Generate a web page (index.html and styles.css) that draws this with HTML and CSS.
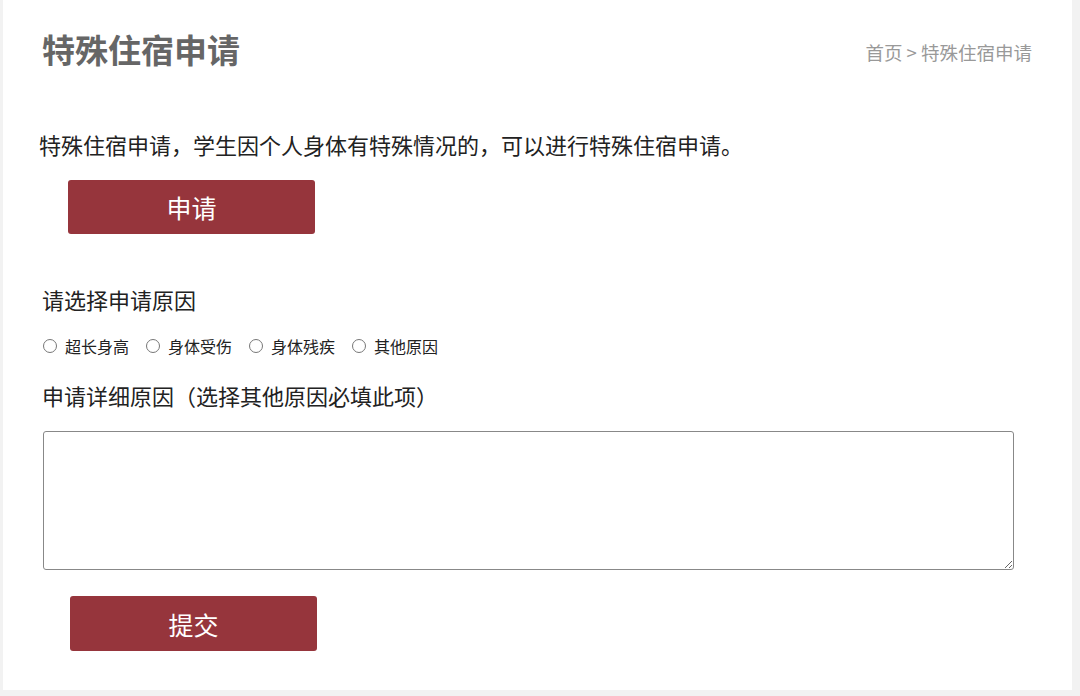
FILE: index.html
```html
<!DOCTYPE html>
<html lang="zh-CN">
<head>
<meta charset="utf-8">
<title>特殊住宿申请</title>
<link rel="stylesheet" href="styles.css">
</head>
<body>
<div class="panel">
  <div class="header">
    <h1 class="title">特殊住宿申请</h1>
    <div class="crumb">首页 &gt; 特殊住宿申请</div>
  </div>
  <p class="desc">特殊住宿申请，学生因个人身体有特殊情况的，可以进行特殊住宿申请。</p>
  <button class="btn btn-apply" type="button">申请</button>
  <div class="label label-reason">请选择申请原因</div>
  <div class="radios">
    <label class="opt"><input type="radio" name="r"><span>超长身高</span></label>
    <label class="opt"><input type="radio" name="r"><span>身体受伤</span></label>
    <label class="opt"><input type="radio" name="r"><span>身体残疾</span></label>
    <label class="opt"><input type="radio" name="r"><span>其他原因</span></label>
  </div>
  <div class="label label-detail">申请详细原因（选择其他原因必填此项）</div>
  <textarea class="detail"></textarea>
  <button class="btn btn-submit" type="button">提交</button>
</div>
</body>
</html>
```

FILE: styles.css
```css
html, body {
  margin: 0;
  padding: 0;
  background: #f2f2f2;
}
body {
  font-family: "Noto Sans CJK SC", "Noto Sans", sans-serif;
  color: #222;
}
.panel {
  margin-left: 3px;
  width: 1069px;
  height: 690px;
  background: #fff;
  box-sizing: border-box;
  padding: 29px 0 0 34px;
  display: flex;
  flex-direction: column;
  align-items: flex-start;
}
.header {
  width: 995px;
  display: flex;
  justify-content: space-between;
  align-items: flex-start;
}
.title {
  margin: 0 0 0 5px;
  font-size: 33px;
  line-height: 40px;
  font-weight: bold;
  color: #666;
}
.crumb {
  margin-top: 11px;
  font-size: 18.5px;
  line-height: 24px;
  color: #999;
}
.desc {
  margin: 60px 0 0 2px;
  font-size: 22px;
  line-height: 30px;
  color: #222;
}
.btn {
  width: 247px;
  height: 54px;
  border: none;
  border-radius: 3px;
  background: #96353c;
  color: #fff;
  font-family: "Noto Sans CJK SC", "Noto Sans", sans-serif;
  font-size: 25px;
  padding: 0;
}
.btn-apply {
  margin: 21px 0 0 31px;
}
.label {
  font-size: 22px;
  line-height: 30px;
  margin-left: 5px;
  color: #222;
}
.label-reason {
  margin-top: 50px;
}
.radios {
  margin: 22px 0 0 6px;
  display: flex;
  align-items: center;
  height: 20px;
}
.opt {
  display: flex;
  align-items: center;
  font-size: 16px;
  line-height: 20px;
  margin-right: 17px;
}
.opt input {
  appearance: none;
  -webkit-appearance: none;
  width: 14px;
  height: 14px;
  margin: 0 8px 0 0;
  border: 1px solid #777;
  border-radius: 50%;
  box-sizing: border-box;
  background: #fff;
}
.label-detail {
  margin-top: 24px;
}
.detail {
  margin: 21px 0 0 6px;
  width: 971px;
  height: 139px;
  box-sizing: border-box;
  border: 1px solid #888;
  border-radius: 3px;
  padding: 4px;
  font-family: "Noto Sans CJK SC", sans-serif;
}
.btn-submit {
  margin: 26px 0 0 33px;
  height: 55px;
}
```
